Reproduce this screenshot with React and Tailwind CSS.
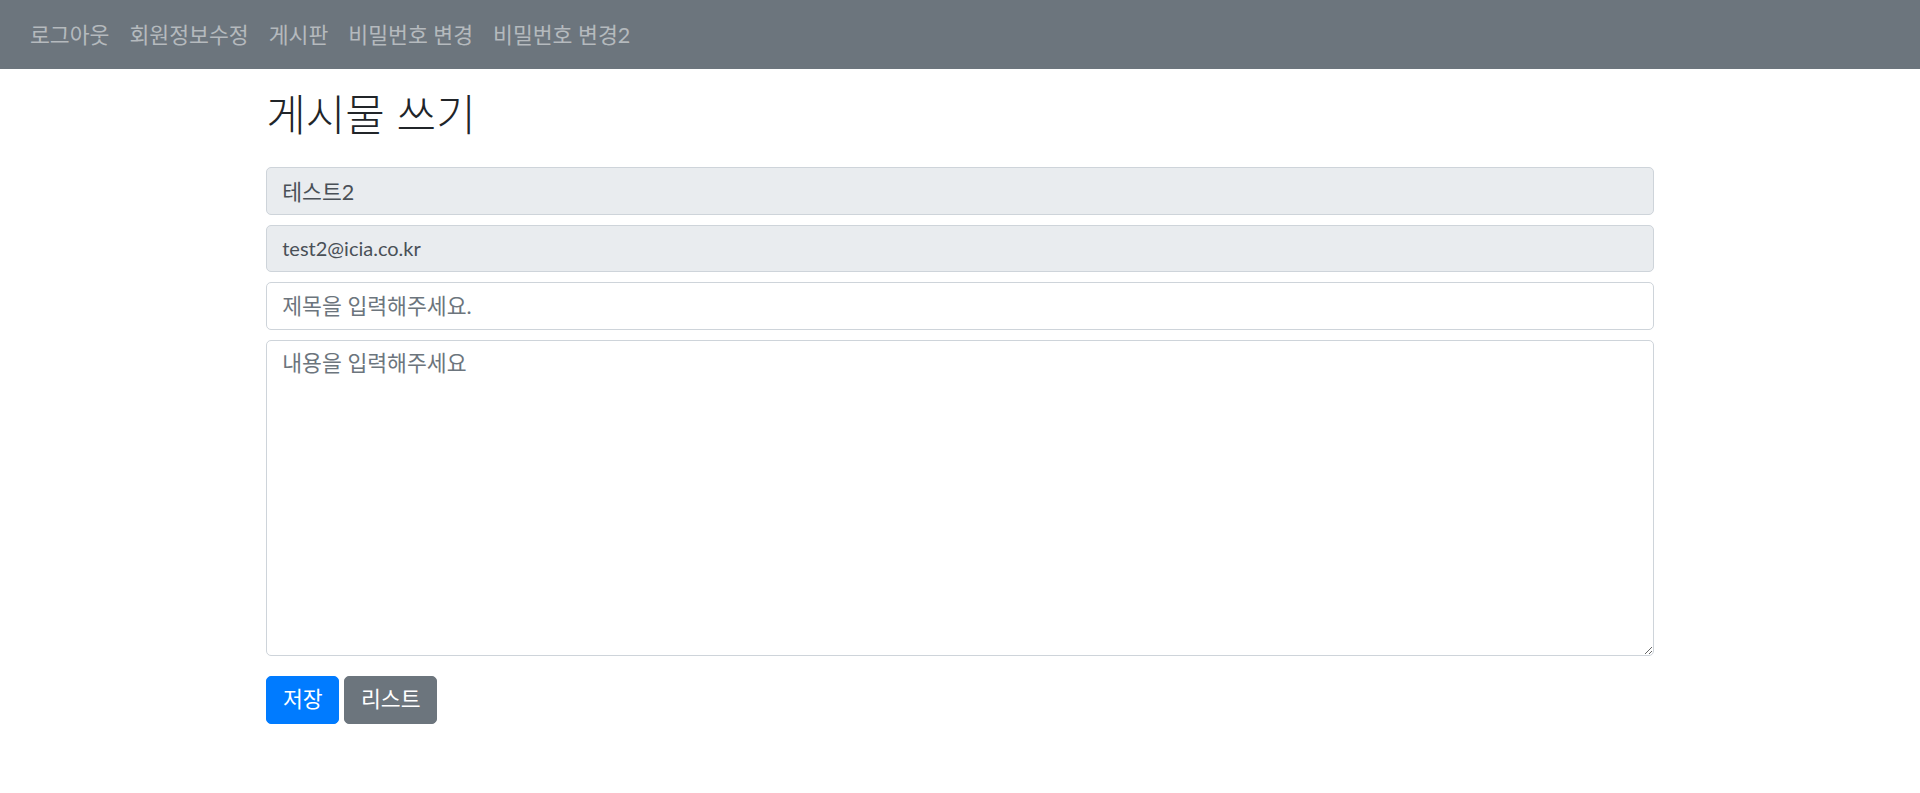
import React from "react";

export default function App() {
  const links = ["로그아웃", "회원정보수정", "게시판", "비밀번호 변경", "비밀번호 변경2"];
  return (
    <div
      className="min-h-[793px] bg-white text-[#212529]"
      style={{ fontFamily: "Lato, 'Noto Sans CJK KR', sans-serif" }}
    >
      <nav className="h-[69px] bg-[#6c757d] flex items-center px-[20px]">
        <ul className="flex items-center">
          {links.map((l) => (
            <li key={l}>
              <a className="block px-[10px] py-[10px] text-[21.6px] leading-[30px] text-[rgba(255,255,255,0.5)]">
                {l}
              </a>
            </li>
          ))}
        </ul>
      </nav>
      <div className="w-[1425px] mx-auto px-[18.75px]">
        <h2 className="mt-[22px] mb-[28px] text-[43px] leading-[48px] font-light">게시물 쓰기</h2>
        <form className="flex flex-col gap-[10px]" onSubmit={(e) => e.preventDefault()}>
          <input
            readOnly
            value="테스트2"
            className="block w-full h-[47.5px] px-[15px] text-[21.6px] text-[#495057] bg-[#e9ecef] border border-[#ced4da] rounded-[5px] outline-none"
          />
          <input
            readOnly
            value="test2@icia.co.kr"
            className="block w-full h-[47.5px] px-[15px] text-[20px] text-[#495057] bg-[#e9ecef] border border-[#ced4da] rounded-[5px] outline-none"
          />
          <input
            placeholder="제목을 입력해주세요."
            className="block w-full h-[47.5px] px-[15px] text-[21.6px] text-[#495057] bg-white border border-[#ced4da] rounded-[5px] outline-none placeholder:text-[#6c757d]"
          />
          <textarea
            placeholder="내용을 입력해주세요"
            className="block w-full h-[316px] px-[15px] py-[7.5px] text-[21.6px] leading-[30px] text-[#495057] bg-white border border-[#ced4da] rounded-[5px] outline-none resize-y placeholder:text-[#6c757d]"
          />
          <div className="flex gap-[5px] mt-[10px]">
            <button className="w-[73px] h-[48px] flex items-center justify-center text-[21.6px] text-white bg-[#007bff] border border-[#007bff] rounded-[5px]">
              저장
            </button>
            <button className="w-[93px] h-[48px] flex items-center justify-center text-[21.6px] text-white bg-[#6c757d] border border-[#6c757d] rounded-[5px]">
              리스트
            </button>
          </div>
        </form>
      </div>
    </div>
  );
}
